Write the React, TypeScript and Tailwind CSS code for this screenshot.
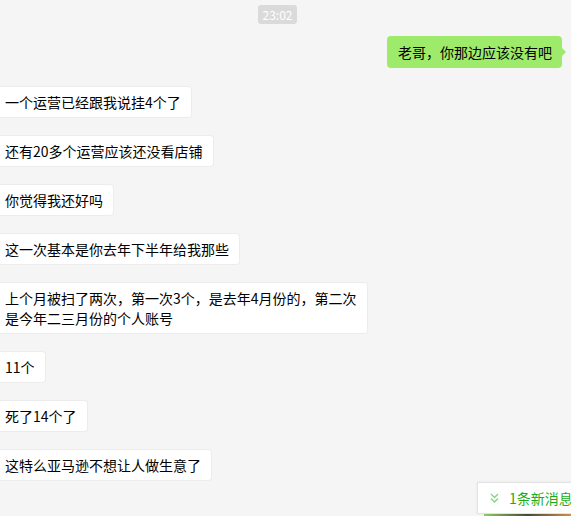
import React from "react";

const messages = [
  "一个运营已经跟我说挂4个了",
  "还有20多个运营应该还没看店铺",
  "你觉得我还好吗",
  "这一次基本是你去年下半年给我那些",
  "上个月被扫了两次，第一次3个，是去年4月份的，第二次是今年二三月份的个人账号",
  "11个",
  "死了14个了",
  "这特么亚马逊不想让人做生意了",
];

const App = () => {
  return (
    <div
      className="relative w-full h-[516px] overflow-hidden bg-[#f5f5f5] text-black"
      style={{ fontFamily: '"Noto Sans CJK SC", "Noto Sans", sans-serif' }}
    >
      {/* time stamp */}
      <div className="flex justify-center pr-[16px] pt-[5px]">
        <span className="rounded-[3px] bg-[#dadada] px-[5px] text-[12px] leading-[19px] text-white">
          23:02
        </span>
      </div>

      {/* my message */}
      <div className="mt-[12px] flex justify-end pr-[9px]">
        <div className="relative rounded-[4px] bg-[#9eea6a] pl-[11px] pr-[10px] py-[6px] text-[14px] leading-[20px]">
          老哥，你那边应该没有吧
          <span className="absolute right-[-4px] top-[12px] h-0 w-0 border-y-[4px] border-l-[4px] border-y-transparent border-l-[#9eea6a]" />
        </div>
      </div>

      {/* incoming messages */}
      <div className="mt-[18px] flex flex-col items-start gap-[17px]">
        {messages.map((m, i) => (
          <div
            key={i}
            className="max-w-[368px] rounded-r-[4px] border border-l-0 border-[#ececec] bg-white pl-[5px] pr-[10px] py-[5px] text-[14px] leading-[20px]"
          >
            {m}
          </div>
        ))}
      </div>

      {/* peek of a picture below */}
      <div className="absolute bottom-0 left-[484px] h-[4px] w-[87px] bg-gradient-to-r from-[#8fd35f] via-[#4a4a3a] to-[#d9904a]" />

      {/* new message tip */}
      <div className="absolute left-[477px] top-[482px] flex h-[32px] w-[110px] items-center gap-[10px] border border-[#e3e3e3] bg-white pl-[12px] shadow-[0_0_3px_rgba(0,0,0,0.06)]">
        <svg width="9" height="10" viewBox="0 0 9 10" fill="none" stroke="#7fd67b" strokeWidth="1.3">
          <path d="M1 1l3.5 3.5L8 1" />
          <path d="M1 5.5L4.5 9 8 5.5" />
        </svg>
        <span className="whitespace-nowrap text-[14px] leading-[20px] text-[#1aad19]">1条新消息</span>
      </div>
    </div>
  );
};

export default App;
